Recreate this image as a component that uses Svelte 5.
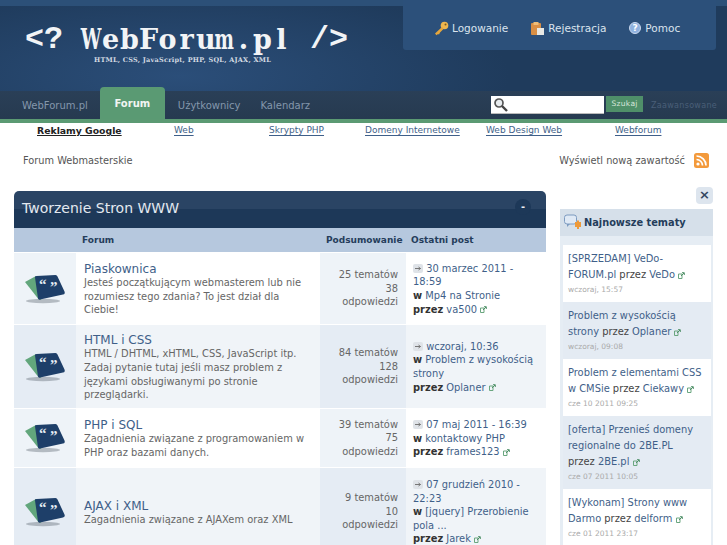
<script lang="ts">
    const navItems = [
        { label: "WebForum.pl", active: false },
        { label: "Forum", active: true },
        { label: "Użytkownicy", active: false },
        { label: "Kalendarz", active: false }
    ];

    const adLinks = ["Web", "Skrypty PHP", "Domeny Internetowe", "Web Design Web", "Webforum"];

    // the logo is a typewriter face, every letter sits in a cell of the same width
    const logoChars = [..."WebForum.pl"];

    const forums = [
        {
            name: "Piaskownica",
            desc: "Jesteś początkującym webmasterem lub nie rozumiesz tego zdania? To jest dział dla Ciebie!",
            topics: "25 tematów", replies: "38", date: "30 marzec 2011 - 18:59", topic: "Mp4 na Stronie", author: "va500"
        },
        {
            name: "HTML i CSS",
            desc: "HTML / DHTML, xHTML, CSS, JavaScript itp. Zadaj pytanie tutaj jeśli masz problem z językami obsługiwanymi po stronie przeglądarki.",
            topics: "84 tematów", replies: "128", date: "wczoraj, 10:36", topic: "Problem z wysokością strony", author: "Oplaner"
        },
        {
            name: "PHP i SQL",
            desc: "Zagadnienia związane z programowaniem w PHP oraz bazami danych.",
            topics: "39 tematów", replies: "75", date: "07 maj 2011 - 16:39", topic: "kontaktowy PHP", author: "frames123"
        },
        {
            name: "AJAX i XML",
            desc: "Zagadnienia związane z AJAXem oraz XML",
            topics: "9 tematów", replies: "10", date: "07 grudzień 2010 - 22:23", topic: "[jquery] Przerobienie pola ...", author: "Jarek"
        }
    ];

    const latest = [
        { title: "[SPRZEDAM] VeDo-FORUM.pl", author: "VeDo", time: "wczoraj, 15:57" },
        { title: "Problem z wysokością strony", author: "Oplaner", time: "wczoraj, 09:08" },
        { title: "Problem z elementami CSS w CMSie", author: "Ciekawy", time: "cze 10 2011 09:25" },
        { title: "[oferta] Przenieś domeny regionalne do 2BE.PL", author: "2BE.pl", time: "cze 07 2011 10:05" },
        { title: "[Wykonam] Strony www Darmo", author: "delform", time: "cze 01 2011 23:17" }
    ];
</script>

{#snippet ext()}
    <svg class="ext" width="7" height="7" viewBox="0 0 7 7"><path d="M0.5 2h3.5v4.5h-3.5z" fill="none" stroke="#6aa67f"/><path d="M3 4l3-3M4 .7h2.3V3" fill="none" stroke="#4f9068"/></svg>
{/snippet}

{#snippet forumIcon()}
    <svg width="42" height="32" viewBox="0 0 42 32">
        <ellipse cx="19" cy="28" rx="17" ry="2.2" fill="#5c6670" opacity="0.4"/>
        <path d="M1 9 L12 3 L17 27 Q15 26.500 14 25.500 Z" fill="#62a67c"/>
        <path d="M11 4.500 Q10.500 3 12.500 3 L31.500 2 Q33 2 33.500 3.500 L40.500 18.500 Q41.500 21 39 21.500 L16 26.500 Q14.500 27 14 25.500 Z" fill="#1e3f69"/>
        <text x="15" y="16" class="quote">“</text>
        <text x="26" y="19" class="quote">”</text>
    </svg>
{/snippet}

<div class="page">
    <header class="banner">
        <div class="logo">
            <h1><span class="cell">&lt;</span><span class="cell">?</span><span class="cell"></span>{#each logoChars as c}<span class="cell serif"><span class:squeeze={c === "W" || c === "m"}>{c}</span></span>{/each}<span class="cell"></span><span class="cell">/</span><span class="cell">&gt;</span></h1>
            <p>HTML, CSS, JavaScript, PHP, SQL, AJAX, XML</p>
        </div>
        <div class="user-links">
            <a href="#top">
                <svg width="15" height="15" viewBox="0 0 15 15"><circle cx="10.500" cy="4.500" r="3.800" fill="#efb64e"/><circle cx="11.500" cy="3.500" r="1" fill="#7a5a20"/><path d="M8 6L1 12.500l1.500 1.800L4 13l1 .5 1-2 3.500-3.500z" fill="#e6a63c"/></svg>
                Logowanie
            </a>
            <a href="#top">
                <svg width="15" height="15" viewBox="0 0 15 15"><rect x="1" y="2" width="10" height="12" rx="1" fill="#d98f45"/><rect x="3.500" y="1" width="5" height="3" fill="#eebd79"/><rect x="7" y="7" width="7" height="7" fill="#e8e8e4"/></svg>
                Rejestracja
            </a>
            <a href="#top">
                <svg width="14" height="14" viewBox="0 0 14 14"><circle cx="7" cy="7" r="5.500" fill="#8fb2e0" stroke="#c9d8ee"/><text x="7" y="10" class="help">?</text></svg>
                Pomoc
            </a>
        </div>
    </header>

    <nav class="navbar">
        <ul>
            {#each navItems as item}
                <li class:active={item.active}>{item.label}</li>
            {/each}
        </ul>
        <div class="search">
            <div class="search-input">
                <svg width="16" height="15" viewBox="0 0 16 15"><circle cx="6" cy="6" r="4" fill="#e8ecef" stroke="#555" stroke-width="1.700"/><path d="M9 9l5 5" stroke="#444" stroke-width="2.400"/></svg>
            </div>
            <span class="search-btn">Szukaj</span>
            <span class="advanced">Zaawansowane</span>
        </div>
    </nav>

    <div class="ads">
        <b>Reklamy Google</b>
        {#each adLinks as link}
            <a href="#top">{link}</a>
        {/each}
    </div>

    <div class="crumbs">
        <span>Forum Webmasterskie</span>
        <span class="new-content">
            Wyświetl nową zawartość
            <svg width="15" height="15" viewBox="0 0 15 15"><rect width="15" height="15" rx="2.500" fill="#f39a3c"/><circle cx="4" cy="11" r="1.600" fill="#fff"/><path d="M2.500 6.500a6 6 0 0 1 6 6M2.500 3a9.500 9.500 0 0 1 9.500 9.500" fill="none" stroke="#fff" stroke-width="1.700"/></svg>
        </span>
    </div>

    <div class="content">
        <main class="category">
            <div class="cat-title">
                <h2>Tworzenie Stron WWW</h2>
                <span class="collapse">-</span>
            </div>
            <div class="row head">
                <span></span>
                <span>Forum</span>
                <span class="head-stats">Podsumowanie</span>
                <span>Ostatni post</span>
            </div>
            {#each forums as forum, i}
                <div class="row" class:odd={i % 2 === 1}>
                    <div class="cell-icon">{@render forumIcon()}</div>
                    <div class="cell-forum">
                        <a href="#top" class="forum-name">{forum.name}</a>
                        <p>{forum.desc}</p>
                    </div>
                    <div class="cell-stats"><div>{forum.topics}<br />{forum.replies}<br />odpowiedzi</div></div>
                    <div class="cell-last">
                        <svg class="arrow" width="10" height="9" viewBox="0 0 10 9"><rect width="10" height="9" rx="2" fill="#dfe3e8"/><path d="M2 4.500h5.500M5.500 3l2 1.500-2 1.500" fill="none" stroke="#777"/></svg>
                        <a href="#top">{forum.date}</a><br />
                        <b>w</b> <a href="#top">{forum.topic}</a><br />
                        <b>przez</b> <a href="#top">{forum.author}</a> {@render ext()}
                    </div>
                </div>
            {/each}
        </main>

        <aside class="sidebar">
            <span class="close">×</span>
            <div class="panel">
                <h3>
                    <svg width="18" height="17" viewBox="0 0 18 17"><rect x="0.500" y="1" width="12" height="9" rx="2.500" fill="#dfe9f5" stroke="#7d9bc0"/><path d="M3 10l0 3 3-3z" fill="#7d9bc0"/><path d="M11 8h2V6.500h2V8h2v5h-2v2h-2v-2h-2z" fill="#ee9a3a"/></svg>
                    Najnowsze tematy
                </h3>
                <ul>
                    {#each latest as item, i}
                        <li class:odd={i % 2 === 1}>
                            <a href="#top">{item.title}</a> przez&nbsp;<a href="#top">{item.author}</a> {@render ext()}
                            <small>{item.time}</small>
                        </li>
                    {/each}
                </ul>
            </div>
        </aside>
    </div>
</div>

<style>
    :global(body) {
        margin: 0;
        background: #fff;
        overflow: hidden;
    }

    .page {
        width: 727px;
        height: 545px;
        overflow: hidden;
        font-family: "DejaVu Sans", sans-serif;
        font-size: 9.900px;
        color: #666;
    }

    a {
        color: #3f5f89;
        text-decoration: none;
    }

    h1, h2, h3, p, ul {
        margin: 0;
        padding: 0;
    }

    ul {
        list-style: none;
    }

    .banner {
        height: 91px;
        display: flex;
        justify-content: space-between;
        align-items: flex-start;
        box-sizing: border-box;
        padding: 0 11px 0 25px;
        border-top: 6px solid #2c5078;
        background: radial-gradient(ellipse 330px 90px at 180px 70px, #2b4e79, #1f3b5c 100%), #1d3653;
    }

    .logo h1 {
        display: flex;
        margin-top: 17px;
        font-family: "Liberation Mono", monospace;
        font-size: 31.700px;
        line-height: 34px;
        color: #f2f4f6;
    }

    .cell {
        width: 19px;
        flex: none;
        text-align: center;
    }

    .cell.serif {
        font-family: "DejaVu Serif", serif;
        font-size: 27px;
    }

    .squeeze {
        display: inline-block;
        margin: 0 -6px;
        transform: scaleX(0.68);
    }

    .logo p {
        margin: -1px 0 0 69px;
        font-family: "DejaVu Serif", serif;
        font-weight: bold;
        font-size: 6.500px;
        letter-spacing: 0.250px;
        line-height: 8px;
        white-space: nowrap;
        color: #d3dae2;
    }

    .user-links {
        width: 282px;
        height: 44px;
        margin-top: -6px;
        padding: 6px 0 0 31px;
        display: flex;
        align-items: center;
        gap: 22px;
        border-radius: 0 0 3px 3px;
        background: #2c507a;
    }

    .user-links a {
        display: flex;
        align-items: center;
        gap: 3px;
        font-size: 10.500px;
        color: #dbe4ee;
    }

    .navbar {
        height: 28px;
        display: flex;
        justify-content: space-between;
        border-bottom: 4px solid #5b9a73;
        background: linear-gradient(#2a3f57, #263a50);
    }

    .navbar ul {
        display: flex;
        padding-left: 12px;
    }

    .navbar li {
        padding: 0 10px;
        line-height: 30px;
        font-size: 10px;
        color: #8497ac;
    }

    .navbar li.active {
        width: 65px;
        height: 32px;
        margin: -4px 3px 0 2px;
        padding: 0;
        box-sizing: border-box;
        text-align: center;
        line-height: 34px;
        font-weight: bold;
        color: #f1f5f2;
        background: #5a9a73;
        border-radius: 4px 4px 0 0;
    }

    .search {
        display: flex;
        align-items: flex-start;
        padding: 5px 10px 0 0;
    }

    .search-input {
        width: 113px;
        height: 18px;
        box-sizing: border-box;
        padding: 1px 2px;
        background: #fff;
        border-bottom: 1px solid #bbb;
    }

    .search-btn {
        margin-left: 2px;
        width: 37px;
        height: 16px;
        text-align: center;
        font-size: 7.500px;
        line-height: 16px;
        color: #d7e6dc;
        letter-spacing: 0.300px;
        background: #4f8f69;
    }

    .advanced {
        margin-left: 8px;
        font-size: 8px;
        line-height: 20px;
        color: #4a5f78;
        letter-spacing: 0.300px;
    }

    .ads {
        height: 15px;
        display: grid;
        grid-template-columns: 137px 95px 96px 121px 129px auto;
        padding-left: 37px;
        font-size: 9px;
        line-height: 15px;
    }

    .ads b {
        font-size: 9.300px;
        color: #222;
        text-decoration: underline;
    }

    .ads a {
        text-decoration: underline;
        text-underline-offset: 2px;
    }

    .crumbs {
        height: 45px;
        display: flex;
        justify-content: space-between;
        align-items: center;
        padding: 0 18px 0 23px;
        font-size: 9.800px;
        color: #555;
    }

    .new-content {
        display: flex;
        align-items: center;
        gap: 9px;
    }

    .content {
        margin-top: 8px;
        display: flex;
        padding-left: 14px;
        gap: 14px;
    }

    .category {
        width: 532px;
        flex: none;
    }

    .cat-title {
        height: 37px;
        display: flex;
        justify-content: space-between;
        padding: 0 15px 0 8px;
        box-sizing: border-box;
        border-radius: 5px 5px 0 0;
        background: linear-gradient(#2a4464 0, #2a4464 50%, #1d3858 50%, #1d3858 100%);
    }

    .cat-title h2 {
        font-weight: normal;
        font-size: 14px;
        line-height: 34px;
        color: #e3e9f0;
    }

    .collapse {
        width: 16px;
        height: 16px;
        margin-top: 8px;
        border-radius: 50%;
        text-align: center;
        line-height: 15px;
        font-weight: bold;
        color: #e6ebf0;
        background: #1d3858;
    }

    .row {
        display: grid;
        grid-template-columns: 62px 244px 86px 140px;
        box-sizing: border-box;
        border-bottom: 1px solid #fff;
        background: #fff;
    }

    .row:nth-child(3) { height: 72px; }
    .row:nth-child(4) { height: 84px; }
    .row:nth-child(5) { height: 59px; }
    .row:nth-child(6) { height: 88px; }

    .row.head {
        height: 25px;
        line-height: 24px;
        font-size: 9px;
        font-weight: bold;
        color: #253d5b;
        background: #b6c8de;
    }

    .row.head span:nth-child(2) {
        padding-left: 6px;
    }

    .head-stats {
        white-space: nowrap;
        padding-left: 6px;
    }

    .row.head span:nth-child(4) {
        padding-left: 5px;
    }

    .cell-icon {
        display: flex;
        justify-content: center;
        align-items: center;
        background: #eef3f8;
    }

    .cell-forum {
        align-self: center;
        padding: 2px 8px 0;
        line-height: 13.600px;
    }

    .forum-name {
        display: block;
        font-size: 12px;
        line-height: 14px;
        color: #3f5f89;
    }

    .cell-stats {
        display: flex;
        align-items: center;
        justify-content: flex-end;
        padding-right: 8px;
        text-align: right;
        line-height: 13.600px;
        background: #eef3f8;
    }

    .cell-last {
        align-self: center;
        padding: 1px 6px 0 7px;
        line-height: 13.600px;
    }

    .cell-last b {
        color: #333;
    }

    .arrow {
        vertical-align: -1px;
    }

    .ext {
        vertical-align: -0.500px;
    }

    .row.odd {
        background: #f0f4f8;
    }

    .row.odd .cell-icon, .row.odd .cell-stats {
        background: #e5ecf4;
    }

    .quote {
        font-family: "Liberation Serif", serif;
        font-size: 15px;
        font-weight: bold;
        fill: #e8eef4;
    }

    .help {
        font-size: 9px;
        font-weight: bold;
        fill: #fff;
        text-anchor: middle;
    }

    .sidebar {
        width: 153px;
        flex: none;
        display: flex;
        flex-direction: column;
        align-items: flex-end;
        margin-top: -4px;
    }

    .close {
        width: 17px;
        height: 17px;
        border-radius: 4px;
        text-align: center;
        line-height: 16px;
        font-size: 13px;
        font-weight: bold;
        color: #33475f;
        background: #dde5ee;
    }

    .panel {
        width: 153px;
        margin-top: 5px;
        box-sizing: border-box;
        background: #e6edf4;
        padding-bottom: 2px;
    }

    .panel h3 {
        height: 27px;
        display: flex;
        align-items: center;
        gap: 2px;
        padding-left: 4px;
        font-size: 9.800px;
        color: #253d5b;
        background: #d6e0ea;
    }

    .panel ul {
        margin: 9px 2px 0 3px;
    }

    .panel li {
        padding: 6px 5px;
        line-height: 16px;
        color: #444;
        background: #fff;
    }

    .panel li.odd {
        background: #e4ebf3;
    }

    .panel small {
        display: block;
        margin-top: 1px;
        font-size: 7.500px;
        line-height: 12px;
        color: #aaa;
    }
</style>
